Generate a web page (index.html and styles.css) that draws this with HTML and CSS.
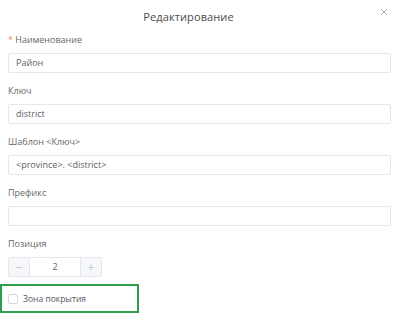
FILE: index.html
```html
<!DOCTYPE html>
<html lang="ru">
<head>
    <meta charset="UTF-8">
    <title>Редактирование</title>
    <link rel="stylesheet" href="styles.css">
</head>
<body>
    <div class="dialog">
        <div class="dialog-header">
            <span class="dialog-title">Редактирование</span>
            <svg class="dialog-close" width="8" height="8" viewBox="0 0 8 8">
                <path d="M1 1L7 7M7 1L1 7" stroke="#b0b3b8" stroke-width="1" fill="none"/>
            </svg>
        </div>

        <div class="form-item">
            <label class="form-label"><span class="required">*</span> Наименование</label>
            <div class="input">Район</div>
        </div>
        <div class="form-item">
            <label class="form-label">Ключ</label>
            <div class="input">district</div>
        </div>
        <div class="form-item">
            <label class="form-label">Шаблон &lt;Ключ&gt;</label>
            <div class="input">&lt;province&gt;. &lt;district&gt;</div>
        </div>
        <div class="form-item">
            <label class="form-label">Префикс</label>
            <div class="input"></div>
        </div>
        <div class="form-item">
            <label class="form-label">Позиция</label>
            <div class="number-input">
                <span class="number-btn">&minus;</span>
                <span class="number-value">2</span>
                <span class="number-btn">+</span>
            </div>
        </div>

        <div class="highlight">
            <span class="checkbox"></span>
            <span class="checkbox-label">Зона покрытия</span>
        </div>
    </div>
</body>
</html>
```

FILE: styles.css
```css
body {
    margin: 0;
    background: #ffffff;
    font-family: 'Open Sans', 'Noto Sans', sans-serif;
    color: #606266;
}
.dialog {
    padding: 0 9px 0 8px;
}
.dialog-header {
    position: relative;
    height: 33px;
    display: flex;
    align-items: center;
    justify-content: center;
}
.dialog-title {
    font-size: 11px;
    letter-spacing: 0.1px;
    color: #4a4c50;
    margin-right: 22px;
}
.dialog-close {
    position: absolute;
    right: 3px;
    top: 8px;
}
.form-item {
    margin-bottom: 11px;
}
.form-label {
    display: block;
    font-size: 9px;
    line-height: 14px;
    margin-bottom: 6px;
    color: #66686c;
}
.required {
    color: #f08a5d;
}
.input {
    height: 20px;
    box-sizing: border-box;
    border: 1px solid #e4e7ec;
    border-radius: 2px;
    padding: 0 7px;
    font-size: 9px;
    line-height: 18px;
    color: #5e6066;
}
.number-input {
    display: flex;
    width: 94px;
    height: 20px;
    box-sizing: border-box;
    border: 1px solid #e4e7ec;
    border-radius: 2px;
    overflow: hidden;
}
.number-btn {
    width: 20px;
    background: #f5f7fa;
    color: #a8abb2;
    display: flex;
    align-items: center;
    justify-content: center;
    font-size: 12px;
    font-weight: 300;
}
.number-btn:first-child {
    border-right: 1px solid #e4e7ec;
}
.number-btn:last-child {
    border-left: 1px solid #e4e7ec;
}
.number-value {
    flex: 1;
    text-align: center;
    font-size: 9px;
    line-height: 18px;
    color: #5e6066;
}
.highlight {
    margin: -4px 0 0 -8px;
    width: 139px;
    height: 29px;
    box-sizing: border-box;
    border: 2px solid #2f9e4c;
    display: flex;
    align-items: center;
    padding-left: 6px;
    gap: 5px;
}
.checkbox {
    width: 8px;
    height: 8px;
    border: 1px solid #d4d7de;
    border-radius: 2px;
    background: #fff;
}
.checkbox-label {
    font-size: 8.5px;
    color: #55575c;
}
```
